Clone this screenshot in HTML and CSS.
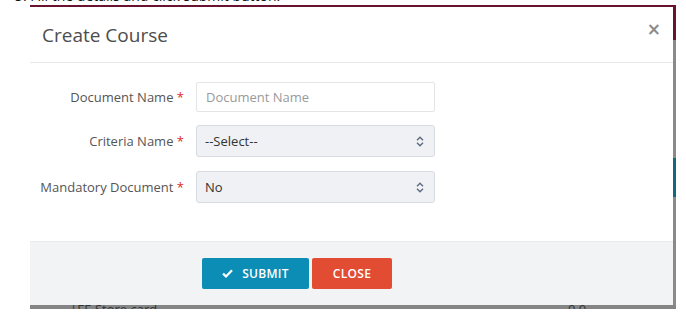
FILE: index.html
```html
<!DOCTYPE html>
<html lang="en">
<head>
  <meta charset="UTF-8" />
  <title>Create Course</title>
  <link rel="stylesheet" href="styles.css">
</head>
<body>
  <div class="step"><span>3. Fill the details and click submit button.</span></div>
  <div class="stage">
    <div class="modal">
      <div class="modal-header">
        <h4 class="modal-title">Create Course</h4>
        <button class="close">&times;</button>
      </div>
      <div class="modal-body">
        <div class="form-row">
          <label>Document Name <span class="req">*</span></label>
          <input class="field" type="text" placeholder="Document Name">
        </div>
        <div class="form-row">
          <label>Criteria Name <span class="req">*</span></label>
          <div class="select">
            <span>--Select--</span>
            <svg width="8" height="11" viewBox="0 0 8 11"><path d="M1 4.2 4 1.2 7 4.2M1 6.8 4 9.8 7 6.8" fill="none" stroke="#5d6b7e" stroke-width="1.4"/></svg>
          </div>
        </div>
        <div class="form-row">
          <label>Mandatory Document <span class="req">*</span></label>
          <div class="select">
            <span>No</span>
            <svg width="8" height="11" viewBox="0 0 8 11"><path d="M1 4.2 4 1.2 7 4.2M1 6.8 4 9.8 7 6.8" fill="none" stroke="#5d6b7e" stroke-width="1.4"/></svg>
          </div>
        </div>
      </div>
      <div class="modal-footer">
        <button class="btn btn-submit">
          <svg width="11" height="9" viewBox="0 0 11 9"><path d="M1 4.6 4 7.4 10 1.2" fill="none" stroke="#fff" stroke-width="2.2"/></svg>
          SUBMIT
        </button>
        <button class="btn btn-close">CLOSE</button>
      </div>
    </div>
    <div class="under">
      <span class="cell-name">|EE Store card</span>
      <span class="cell-num">0 0</span>
    </div>
  </div>
</body>
</html>
```
FILE: styles.css
```css
* {
  box-sizing: border-box;
}
body {
  margin: 0;
  background: #fff;
  font-family: "Open Sans", "Liberation Sans", sans-serif;
  color: #555;
}
.step {
  height: 5px;
  overflow: hidden;
  padding-left: 15px;
}
.step span {
  display: block;
  margin-top: -12px;
  font-size: 14px;
  line-height: 16px;
  color: #111;
}
.stage {
  margin-left: 30px;
  width: 646px;
  border-top: 2px solid #6a1330;
  padding-right: 3px;
  background: linear-gradient(to bottom, #6a1330 0 33px, #8a8a8a 33px 151px, #0f6a7e 151px 190px, #8a8a8a 190px);
}
.modal {
  background: #fff;
  height: 298px;
  display: flex;
  flex-direction: column;
}
.modal-header {
  height: 56px;
  border-bottom: 1px solid #e8e8e8;
  display: flex;
  align-items: flex-start;
  justify-content: space-between;
  padding: 0 12px 0 12px;
}
.modal-title {
  margin: 15px 0 0;
  font-size: 19px;
  font-weight: normal;
  color: #4d4d4d;
}
.close {
  margin-top: 12px;
  border: none;
  background: none;
  padding: 0;
  font-family: "DejaVu Sans", sans-serif;
  font-size: 17px;
  font-weight: bold;
  color: #8c8c8c;
}
.modal-body {
  padding: 19px 0 0;
  height: 178px;
  display: flex;
  flex-direction: column;
  gap: 13px;
}
.form-row {
  display: grid;
  grid-template-columns: 154px 239px;
  column-gap: 12px;
  align-items: center;
}
.form-row + .form-row + .form-row {
  margin-top: 1px;
}
.form-row label {
  text-align: right;
  font-size: 13px;
  color: #555;
}
.req {
  color: #e02b2b;
}
.field {
  height: 30px;
  border: 1px solid #e4e4e4;
  border-radius: 2px;
  padding: 0 9px;
  font-family: inherit;
  font-size: 13px;
  color: #333;
}
.field::placeholder {
  color: #9a9a9a;
}
.select {
  height: 32px;
  background: #eff1f4;
  border: 1px solid #d7dce2;
  border-radius: 3px;
  display: flex;
  align-items: center;
  justify-content: space-between;
  padding: 0 10px 0 8px;
  font-size: 13px;
  color: #333;
}
.modal-footer {
  flex: 1;
  background: #f2f3f5;
  border-top: 1px solid #e9eaed;
  display: flex;
  align-items: flex-start;
  gap: 3px;
  padding: 16px 0 0 172px;
}
.btn {
  height: 31px;
  border: none;
  border-radius: 2px;
  color: #fff;
  font-family: inherit;
  font-size: 12px;
  font-weight: 600;
  letter-spacing: 0.3px;
  display: flex;
  align-items: center;
  justify-content: center;
  gap: 9px;
}
.btn-submit {
  width: 107px;
  background: #0b8db5;
}
.btn-close {
  width: 80px;
  background: #e24c33;
}
.under {
  height: 4px;
  overflow: hidden;
  background: #858585;
  margin-right: -3px;
  position: relative;
}
.under span {
  position: absolute;
  top: -4px;
  font-size: 13px;
  line-height: 16px;
  color: #333;
}
.cell-name {
  left: 40px;
}
.cell-num {
  left: 538px;
}
```
